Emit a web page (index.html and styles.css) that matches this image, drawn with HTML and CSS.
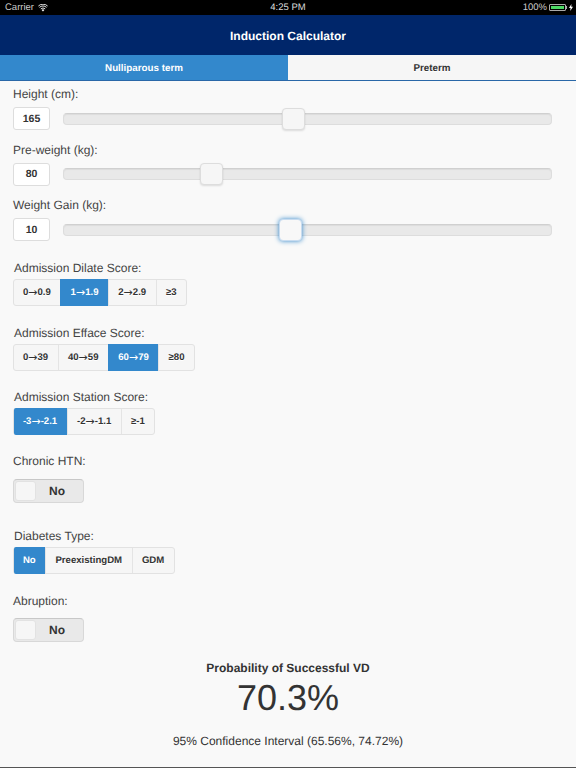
FILE: index.html
```html
<!DOCTYPE html>
<html>

  <head>
    <meta charset="utf-8">
    <title>Induction Calculator</title>
    <link rel="stylesheet" href="styles.css">
  </head>

  <body>
    <div class="statusBar">
      <div class="statusLeft">
        <span>Carrier</span>
        <svg class="wifi" width="10" height="8" viewBox="0 0 10 8">
          <path d="M5 7.6 L3.6 6 A2 2 0 0 1 6.4 6 Z" fill="#fff"/>
          <path d="M2.8 4.9 A3.3 3.3 0 0 1 7.2 4.9 M1.5 3.4 A5 5 0 0 1 8.5 3.4 M0.4 2 A6.6 6.6 0 0 1 9.6 2" fill="none" stroke="#fff" stroke-width="0.9"/>
        </svg>
      </div>
      <div class="statusTime">4:25 PM</div>
      <div class="statusRight">
        <span>100%</span>
        <div class="battery"><div class="batteryFill"></div></div>
        <div class="batteryTip"></div>
        <svg width="4" height="7" viewBox="0 0 4 7"><path d="M2.4 0 L0 4 H1.6 L1.2 7 L4 2.8 H2.3 Z" fill="#fff"/></svg>
      </div>
    </div>

    <div class="header">Induction Calculator</div>

    <div class="tabs">
      <div class="tab tabActive">Nulliparous term</div>
      <div class="tab">Preterm</div>
    </div>

    <div class="content">
      <div class="sliderField first">
        <div class="label">Height (cm):</div>
        <div class="sliderRow">
          <div class="numBox">165</div>
          <div class="track"><div class="thumb" style="left: 218px"></div></div>
        </div>
      </div>

      <div class="sliderField">
        <div class="label">Pre-weight (kg):</div>
        <div class="sliderRow">
          <div class="numBox">80</div>
          <div class="track"><div class="thumb" style="left: 136px"></div></div>
        </div>
      </div>

      <div class="sliderField">
        <div class="label">Weight Gain (kg):</div>
        <div class="sliderRow">
          <div class="numBox">10</div>
          <div class="track"><div class="thumb thumbFocus" style="left: 215px"></div></div>
        </div>
      </div>

      <div class="group">
        <div class="groupLabel">Admission Dilate Score:</div>
        <div class="btnGroup">
          <div class="btn">0<span class="arrow">→</span>0.9</div>
          <div class="btn btnOn">1<span class="arrow">→</span>1.9</div>
          <div class="btn">2<span class="arrow">→</span>2.9</div>
          <div class="btn">≥3</div>
        </div>
      </div>

      <div class="group">
        <div class="groupLabel">Admission Efface Score:</div>
        <div class="btnGroup">
          <div class="btn">0<span class="arrow">→</span>39</div>
          <div class="btn">40<span class="arrow">→</span>59</div>
          <div class="btn btnOn">60<span class="arrow">→</span>79</div>
          <div class="btn">≥80</div>
        </div>
      </div>

      <div class="group station">
        <div class="groupLabel">Admission Station Score:</div>
        <div class="btnGroup">
          <div class="btn btnOn">-3<span class="arrow">→</span>-2.1</div>
          <div class="btn">-2<span class="arrow">→</span>-1.1</div>
          <div class="btn">≥-1</div>
        </div>
      </div>

      <div class="switchField">
        <div class="label">Chronic HTN:</div>
        <div class="switch"><div class="knob"></div><span class="switchText">No</span></div>
      </div>

      <div class="group diabetes">
        <div class="groupLabel">Diabetes Type:</div>
        <div class="btnGroup">
          <div class="btn btnOn">No</div>
          <div class="btn">PreexistingDM</div>
          <div class="btn">GDM</div>
        </div>
      </div>

      <div class="switchField">
        <div class="label">Abruption:</div>
        <div class="switch"><div class="knob"></div><span class="switchText">No</span></div>
      </div>

      <div class="result">
        <div class="resultTitle">Probability of Successful VD</div>
        <div class="resultValue">70.3%</div>
        <div class="resultCi">95% Confidence Interval (65.56%, 74.72%)</div>
      </div>
    </div>
  </body>
</html>
```

FILE: styles.css
```css
html {
  background-color: #f9f9f9;
}

body {
  margin: 0;
  width: 576px;
  height: 768px;
  overflow: hidden;
  display: flex;
  flex-direction: column;
  font-family: "Liberation Sans", Arial, sans-serif;
  color: #333;
  text-rendering: geometricPrecision;
  border-bottom: 1px solid #555;
  box-sizing: border-box;
}

.statusBar {
  height: 15px;
  flex: none;
  background-color: #000;
  color: #ccc;
  font-size: 9.5px;
  display: flex;
  align-items: center;
  justify-content: space-between;
  padding: 0 3px 0 5px;
  position: relative;
}

.statusLeft,
.statusRight {
  display: flex;
  align-items: center;
}

.wifi {
  margin-left: 4px;
}

.statusTime {
  position: absolute;
  left: 0;
  right: 0;
  text-align: center;
  color: #ddd;
}

.battery {
  width: 17px;
  height: 7px;
  margin-left: 2px;
  padding: 1px;
  box-sizing: border-box;
  border: 1px solid #aaa;
  border-radius: 1px;
}

.batteryFill {
  height: 100%;
  background-color: #4cd964;
}

.batteryTip {
  width: 1px;
  height: 3px;
  margin-right: 2px;
  background-color: #aaa;
}

.header {
  height: 40px;
  flex: none;
  box-sizing: border-box;
  padding-top: 2px;
  background-color: #00266a;
  color: #fff;
  font-size: 12px;
  font-weight: bold;
  display: flex;
  align-items: center;
  justify-content: center;
}

.tabs {
  height: 26px;
  flex: none;
  display: flex;
  box-sizing: border-box;
  border-bottom: 1px solid #2a68a8;
}

.tab {
  width: 50%;
  display: flex;
  align-items: center;
  justify-content: center;
  padding-top: 1px;
  font-size: 9.8px;
  font-weight: bold;
  background-color: #f6f6f6;
  text-shadow: 0 1px 0 #fff;
}

.tabActive {
  background-color: #3388cc;
  color: #fff;
  text-shadow: none;
}

.content {
  padding: 0 13px;
}

.label,
.groupLabel {
  font-size: 12px;
  line-height: 15px;
  color: #444;
}

.groupLabel {
  padding-left: 1px;
}

.sliderField {
  margin-top: 12.5px;
}

.sliderField.first {
  margin-top: 6px;
}

.sliderRow {
  display: flex;
  align-items: center;
  margin-top: 5px;
  height: 23px;
}

.numBox {
  width: 37px;
  height: 23px;
  box-sizing: border-box;
  background-color: #fff;
  border: 1px solid #ddd;
  border-radius: 3px;
  font-size: 10.5px;
  font-weight: bold;
  display: flex;
  align-items: center;
  justify-content: center;
}

.track {
  width: 489px;
  height: 12px;
  margin-left: 13px;
  box-sizing: border-box;
  position: relative;
  background-color: #e9e9e9;
  border: 1px solid #ddd;
  border-top-color: #d0d0d0;
  border-radius: 4px;
  box-shadow: inset 0 1px 1px rgba(0, 0, 0, 0.06);
}

.thumb {
  position: absolute;
  top: -6px;
  width: 23px;
  height: 22px;
  box-sizing: border-box;
  background-color: #f6f6f6;
  border: 1px solid #ddd;
  border-radius: 4px;
  box-shadow: 0 1px 2px rgba(0, 0, 0, 0.12);
}

.thumbFocus {
  background-color: #f8f8f8;
  border-color: #c8dcf0;
  box-shadow: 0 0 5px #3388cc;
}

.group {
  margin-top: 20px;
}

.group.station {
  margin-top: 18.5px;
}

.btnGroup {
  display: flex;
  width: max-content;
  margin-top: 3px;
  margin-left: -0.5px;
  height: 27px;
  box-sizing: border-box;
  border: 1px solid #e2e2e2;
  border-radius: 3px;
  background-color: #f6f6f6;
}

.btn {
  display: flex;
  align-items: center;
  padding: 0 9.4px;
  font-size: 9.6px;
  font-weight: bold;
  border-left: 1px solid #e4e4e4;
  text-shadow: 0 1px 0 #fff;
}

.btn:first-child {
  border-left: 0;
  border-radius: 2px 0 0 2px;
}

.arrow {
  font-family: "DejaVu Sans", sans-serif;
  font-size: 11px;
  font-weight: normal;
}

.btnOn {
  margin: -1px 0;
  background-color: #3388cc;
  color: #fff;
  border-left-color: #3388cc;
  text-shadow: none;
}

.switchField {
  margin-top: 19.5px;
}

.switch {
  width: 71px;
  height: 24px;
  margin-top: 9.5px;
  box-sizing: border-box;
  position: relative;
  background-color: #e9e9e9;
  border: 1px solid #d8d8d8;
  border-top-color: #c8c8c8;
  border-radius: 4px;
  display: flex;
  align-items: center;
  justify-content: flex-end;
}

.knob {
  position: absolute;
  left: 1px;
  top: 1px;
  width: 21px;
  height: 20px;
  background-color: #f6f6f6;
  border: 1px solid #e2e2e2;
  box-sizing: border-box;
  border-radius: 3px;
}

.switchText {
  font-size: 12px;
  font-weight: bold;
  margin-right: 18px;
}

.group.diabetes {
  margin-top: 26.5px;
}

.result {
  margin-top: 19px;
  text-align: center;
}

.resultTitle {
  font-size: 12px;
  font-weight: bold;
  line-height: 14px;
}

.resultValue {
  font-size: 36px;
  line-height: 44px;
  margin-top: 1px;
}

.resultCi {
  font-size: 12px;
  line-height: 14px;
  margin-top: 14px;
}
```
